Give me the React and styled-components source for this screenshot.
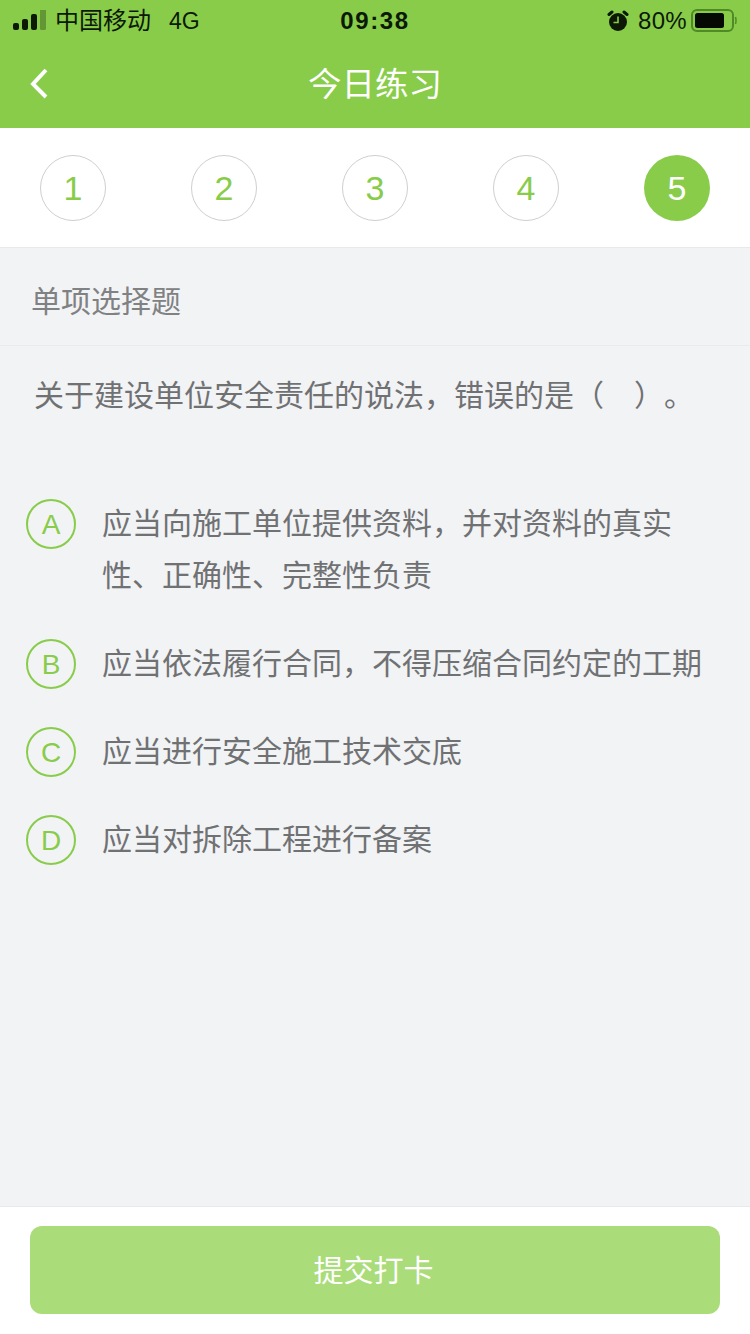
import React from "react";
import styled, { createGlobalStyle } from "styled-components";

const Global = createGlobalStyle`
  html, body { margin: 0; padding: 0; }
  body { font-family: "Liberation Sans", "Noto Sans CJK SC", sans-serif; background: #f2f3f5; text-spacing-trim: space-all; }
  * { box-sizing: border-box; }
`;
const Page = styled.div`
  width: 750px; height: 1334px; display: flex; flex-direction: column; background: #f2f3f5; overflow: hidden;
`;
const Header = styled.header`
  height: 128px; background: #88cc4a; display: flex; flex-direction: column; flex: none;
`;
const StatusBar = styled.div`
  height: 40px; padding: 2px 13px 0 13px; display: grid; grid-template-columns: 1fr auto 1fr; align-items: center; color: #0c1a05;
`;
const StatusLeft = styled.div`
  display: flex; align-items: center; font-size: 24px; line-height: 38px;
`;
const Carrier = styled.span` margin-left: 9px; `;
const Network = styled.span` margin-left: 18px; font-size: 23px; `;
const Clock = styled.div` font-size: 24px; font-weight: 700; letter-spacing: 1.6px; `;
const StatusRight = styled.div`
  display: flex; align-items: center; justify-content: flex-end; font-size: 24px;
`;
const Percent = styled.span` margin: 0 4px 0 9px; letter-spacing: 0.3px; `;
const TitleBar = styled.div`
  flex: 1; display: flex; align-items: center; justify-content: center; padding-top: 2px; position: relative;
`;
const Back = styled.svg` position: absolute; left: 29px; top: 27px; `;
const Title = styled.h1`
  margin: 0; font-size: 33.5px; line-height: 40px; font-weight: 400; color: #fff;
`;
const Steps = styled.nav`
  height: 120px; flex: none; background: #fff; border-bottom: 1px solid #e8e9eb; padding: 27px 40px 0; display: flex; justify-content: space-between; align-items: flex-start;
`;
const Step = styled.div`
  width: 66px; height: 66px; border-radius: 50%; display: flex; align-items: center; justify-content: center; font-size: 34px;
  color: ${p => (p.$active ? "#fff" : "#88cc4a")};
  background: ${p => (p.$active ? "#88cc4a" : "#fff")};
  border: ${p => (p.$active ? "none" : "1px solid #cfcfcf")};
`;
const Kind = styled.div`
  height: 98px; flex: none; padding: 4px 31px 0; display: flex; align-items: center; border-bottom: 1px solid #e9eaec; font-size: 30px; color: #808183;
`;
const Question = styled.p`
  margin: 0; padding: 28px 34px 0; font-size: 30px; line-height: 44px; color: #707173; height: 152px; flex: none;
`;
const Options = styled.ul`
  list-style: none; margin: 0; padding: 0 26px; flex: 1; display: flex; flex-direction: column; gap: 36px;
`;
const Option = styled.li`
  display: flex; align-items: flex-start; gap: 26px;
`;
const Badge = styled.span`
  flex: none; width: 50px; height: 50px; margin-top: 1px; padding-top: 2px; border-radius: 50%; border: 2px solid #88cc4a; color: #88cc4a; display: flex; align-items: center; justify-content: center; font-size: 28px;
`;
const OptionText = styled.span`
  font-size: 30px; line-height: 52px; color: #707173; width: 600px;
`;
const Footer = styled.footer`
  height: 128px; flex: none; background: #fff; border-top: 1px solid #e8e9eb; padding: 19px 30px 0;
`;
const Submit = styled.button`
  width: 690px; height: 88px; border: 0; border-radius: 12px; background: #aadc7a; color: #fff; font: inherit; font-size: 30px; padding: 0 3px 5px 0; display: block;
`;

const options = [
  ["A", "应当向施工单位提供资料，并对资料的真实性、正确性、完整性负责"],
  ["B", "应当依法履行合同，不得压缩合同约定的工期"],
  ["C", "应当进行安全施工技术交底"],
  ["D", "应当对拆除工程进行备案"],
];

const Signal = () => (
  <svg width="33" height="22" viewBox="0 0 33 22">
    <rect x="0" y="13" width="6" height="7" rx="2" fill="#0c1a05" />
    <rect x="9" y="9" width="6" height="11" rx="2" fill="#0c1a05" />
    <rect x="18" y="4" width="6" height="16" rx="2" fill="#0c1a05" />
    <rect x="27" y="-1" width="6" height="21" rx="1.5" fill="#0c1a05" fillOpacity=".3" />
  </svg>
);
const Alarm = () => (
  <svg width="22" height="22" viewBox="0 0 22 22">
    <circle cx="11" cy="12" r="9" fill="#0c1a05" />
    <path d="M2 4.5 L5 2 M17 2 L20 4.5" stroke="#0c1a05" strokeWidth="3" strokeLinecap="round" />
    <path d="M11 6.5 V12.5 H6.5" stroke="#88cc4a" strokeWidth="1.6" fill="none" />
  </svg>
);
const Battery = () => (
  <svg width="46" height="24" viewBox="0 0 46 24">
    <rect x="1" y="1" width="41" height="21" rx="5" fill="none" stroke="#4f8a26" strokeWidth="2" />
    <rect x="4" y="4" width="29" height="15" rx="2.5" fill="#050a02" />
    <path d="M44.5 8 Q45.5 11.5 44.5 15" stroke="#4f8a26" strokeWidth="1.5" fill="none" />
  </svg>
);

export default function App() {
  return (
    <Page>
      <Global />
      <Header>
        <StatusBar>
          <StatusLeft>
            <Signal />
            <Carrier>中国移动</Carrier>
            <Network>4G</Network>
          </StatusLeft>
          <Clock>09:38</Clock>
          <StatusRight>
            <Alarm />
            <Percent>80%</Percent>
            <Battery />
          </StatusRight>
        </StatusBar>
        <TitleBar>
          <Back width="20" height="34" viewBox="0 0 20 34">
            <path d="M17 3 L4 17 L17 30" fill="none" stroke="#fff" strokeWidth="4" />
          </Back>
          <Title>今日练习</Title>
        </TitleBar>
      </Header>
      <Steps>
        {[1, 2, 3, 4, 5].map(n => (
          <Step key={n} $active={n === 5}>{n}</Step>
        ))}
      </Steps>
      <Kind>单项选择题</Kind>
      <Question>关于建设单位安全责任的说法，错误的是（　）。</Question>
      <Options>
        {options.map(([k, t]) => (
          <Option key={k}>
            <Badge>{k}</Badge>
            <OptionText>{t}</OptionText>
          </Option>
        ))}
      </Options>
      <Footer>
        <Submit>提交打卡</Submit>
      </Footer>
    </Page>
  );
}
